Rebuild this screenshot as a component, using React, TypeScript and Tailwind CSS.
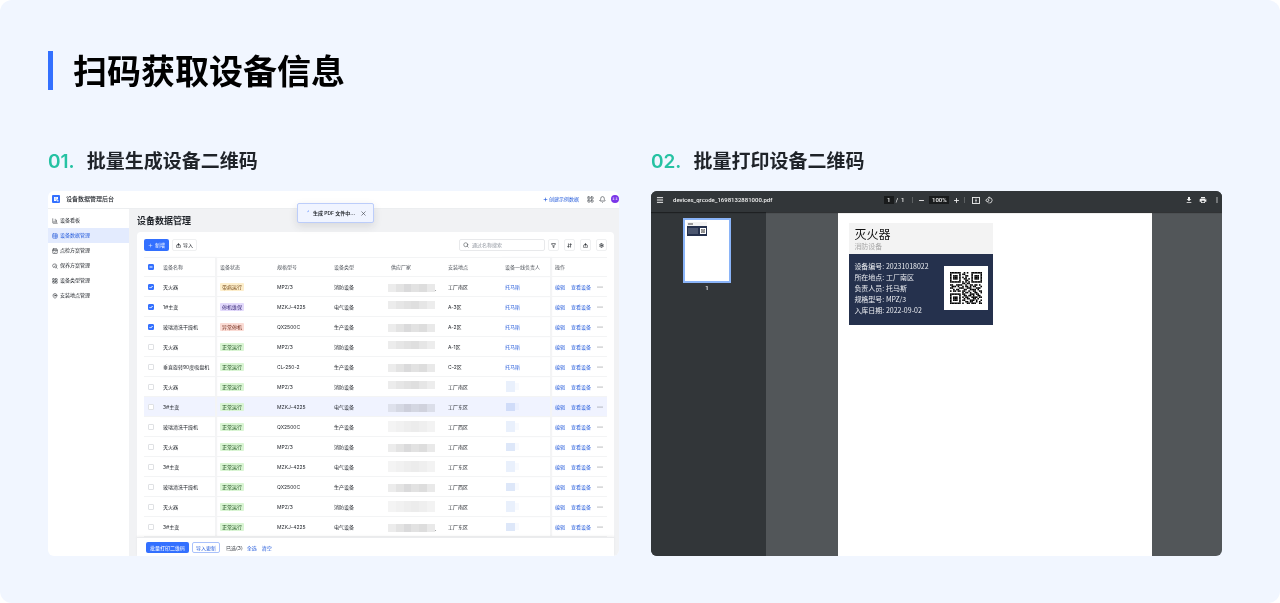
import React, { useState } from 'react';
import {
  ArrowDownUp,
  Bell,
  CalendarCheck,
  ChartColumn,
  Funnel,
  LayoutGrid,
  MapPin,
  Menu,
  Minus,
  Plus,
  Search,
  Settings,
  TableProperties,
  X,
} from 'lucide-react';
import { MdDownload, MdMoreVert, MdPrint, MdRotate90DegreesCcw } from 'react-icons/md';

interface Device {
  id: number;
  name: string;
  status: string;
  model: string;
  type: string;
  supplier: 'a' | 'b' | 'c';
  dot?: boolean;
  location: string;
  owner?: string;
  ownerShade?: 'light' | 'dark';
}

interface IconProps {
  className?: string;
  strokeWidth?: number;
}

const devices: Device[] = [
  { id: 1, name: '灭火器', status: '带病运行', model: 'MPZ/3', type: '消防设备', supplier: 'a', dot: true, location: '工厂南区', owner: '托马斯' },
  { id: 2, name: '1#主变', status: '停机维保', model: 'MZKJ-4225', type: '电气设备', supplier: 'b', location: 'A-3区', owner: '托马斯' },
  { id: 3, name: '玻璃清洗干燥机', status: '异常停机', model: 'QX2500C', type: '生产设备', supplier: 'a', location: 'A-2区', owner: '托马斯' },
  { id: 4, name: '灭火器', status: '正常运行', model: 'MPZ/3', type: '消防设备', supplier: 'b', location: 'A-1区', owner: '托马斯' },
  { id: 5, name: '垂直旋转90度吸盘机', status: '正常运行', model: 'CL-250-2', type: '生产设备', supplier: 'a', location: 'C-2区', owner: '托马斯' },
  { id: 6, name: '灭火器', status: '正常运行', model: 'MPZ/3', type: '消防设备', supplier: 'b', location: '工厂南区', ownerShade: 'light' },
  { id: 7, name: '3#主变', status: '正常运行', model: 'MZKJ-4225', type: '电气设备', supplier: 'a', location: '工厂东区', ownerShade: 'dark' },
  { id: 8, name: '玻璃清洗干燥机', status: '正常运行', model: 'QX2500C', type: '生产设备', supplier: 'c', location: '工厂西区', ownerShade: 'light' },
  { id: 9, name: '灭火器', status: '正常运行', model: 'MPZ/3', type: '消防设备', supplier: 'a', location: '工厂南区', ownerShade: 'dark' },
  { id: 10, name: '3#主变', status: '正常运行', model: 'MZKJ-4225', type: '电气设备', supplier: 'c', location: '工厂东区', ownerShade: 'light' },
  { id: 11, name: '玻璃清洗干燥机', status: '正常运行', model: 'QX2500C', type: '生产设备', supplier: 'a', location: '工厂西区', ownerShade: 'dark' },
  { id: 12, name: '灭火器', status: '正常运行', model: 'MPZ/3', type: '消防设备', supplier: 'c', location: '工厂南区', ownerShade: 'light' },
  { id: 13, name: '3#主变', status: '正常运行', model: 'MZKJ-4225', type: '电气设备', supplier: 'a', dot: true, location: '工厂东区', ownerShade: 'dark' },
];

const statusStyles: Record<string, string> = {
  带病运行: 'bg-[#fdeecb] text-[#6b3d0c]',
  停机维保: 'bg-[#e3dafc] text-[#2f1f6e]',
  异常停机: 'bg-[#fbdcd5] text-[#6e2616]',
  正常运行: 'bg-[#d9f5d3] text-[#1f4f1f]',
};

const mosaics = {
  a: {
    box: 'h-[8px] mt-[2px]',
    cells: ['bg-[#ececec]', 'bg-[#e3e3e3]', 'bg-[#dadadb]', 'bg-[#e2e2e2]', 'bg-[#dddddd]', 'bg-[#e9e9e9]'],
  },
  b: {
    box: 'h-[8px] mb-[4px]',
    cells: ['bg-[#ececec]', 'bg-[#e6e6e6]', 'bg-[#e2e2e2]', 'bg-[#dfdfdf]', 'bg-[#e6e6e6]', 'bg-[#ededed]'],
  },
  c: {
    box: 'h-[11px]',
    cells: ['bg-[#f4f4f4]', 'bg-[#f1f1f1]', 'bg-[#eeeeee]', 'bg-[#ececec]', 'bg-[#efefef]', 'bg-[#f3f3f3]'],
  },
};

function ImportIcon({ className }: IconProps) {
  return (
    <svg viewBox="0 0 24 24" className={className} fill="none" stroke="currentColor" strokeWidth="2.4">
      <path d="M7 11H2.5v10h19V11H17" />
      <path d="M12 17V7" />
      <path d="M12 2l5 6H7z" fill="currentColor" />
    </svg>
  );
}

function MaintainIcon({ className }: IconProps) {
  return (
    <svg viewBox="0 0 24 24" className={className} fill="none" stroke="currentColor" strokeWidth="2">
      <path d="M8 18H6l-4-7 4-7h9l4 7-1 2" />
      <circle cx="14" cy="15" r="4" />
      <path d="M17 18l5 4" />
    </svg>
  );
}

const navItems = [
  { label: '设备看板', icon: ChartColumn },
  { label: '设备数据管理', icon: TableProperties, active: true },
  { label: '点检方案管理', icon: CalendarCheck },
  { label: '保养方案管理', icon: MaintainIcon },
  { label: '设备类型管理', icon: LayoutGrid },
  { label: '安装地点管理', icon: MapPin },
];

const tools = [
  { label: '筛选', icon: Funnel },
  { label: '排序', icon: ArrowDownUp },
  { label: '导出', icon: ImportIcon },
  { label: '设置', icon: Settings },
];

const columns = [
  { title: '设备名称', width: 'w-[57px]' },
  { title: '设备状态', width: 'w-[57px]' },
  { title: '规格型号', width: 'w-[57px]' },
  { title: '设备类型', width: 'w-[57px]' },
  { title: '供应厂家', width: 'w-[57px]' },
  { title: '安装地点', width: 'w-[57px]' },
  { title: '设备一线负责人', width: 'w-[50px]' },
  { title: '操作', width: '' },
];

const labelLines = ['设备编号: 20231018022', '所在地点: 工厂南区', '负责人员: 托马斯', '规格型号: MPZ/3', '入库日期: 2022-09-02'];

const qrRows = [
  '111111100101001111111',
  '100000101100001000001',
  '101110100011001011101',
  '101110101010001011101',
  '101110100110101011101',
  '100000100011001000001',
  '111111101010101111111',
  '000000001101100000000',
  '110011110010011011010',
  '011101001011010110001',
  '110000111001110001110',
  '001011000110011110100',
  '101101101100100110011',
  '000000001011010011001',
  '111111101100011101100',
  '100000100110110100110',
  '101110101011001111011',
  '101110100101100110100',
  '101110101100011101001',
  '100000100011011001010',
  '111111101001101110011',
];

function QrCode({ className }: { className: string }) {
  return (
    <svg viewBox="0 0 21 21" className={className} role="img" aria-label="设备二维码">
      {qrRows.map((row, y) =>
        row.split('').map((cell, x) =>
          cell === '1' ? <rect key={`${x}-${y}`} x={x} y={y} width="1.04" height="1.04" fill="#000" /> : null
        )
      )}
    </svg>
  );
}

function Checkbox({ label, checked, partial, onChange }: {
  label: string;
  checked: boolean;
  partial?: boolean;
  onChange: () => void;
}) {
  return (
    <span className="relative block size-[6px]">
      <input
        type="checkbox"
        aria-label={label}
        checked={checked}
        onChange={onChange}
        className="block size-[6px] appearance-none rounded-[1px] border border-[#dfe1e4] bg-white checked:border-[#3370ff] checked:bg-[#3370ff]"
      />
      {checked && (
        <svg viewBox="0 0 12 12" className="pointer-events-none absolute inset-0 size-[6px]" fill="none" stroke="white" strokeWidth="2">
          <path d={partial ? 'M3 6h6' : 'M3 6l2.2 2.2L9.2 4'} />
        </svg>
      )}
    </span>
  );
}

function SupplierMosaic({ kind, dot }: { kind: 'a' | 'b' | 'c'; dot?: boolean }) {
  const { box, cells } = mosaics[kind];
  return (
    <div className="flex items-end">
      <div className={`flex w-[47px] shrink-0 mix-blend-multiply ${box}`}>
        {cells.map((cell, i) => (
          <span key={i} className={`flex-1 ${cell}`} />
        ))}
      </div>
      {dot && <span className="text-[5px] leading-[6px]">.</span>}
    </div>
  );
}

function OwnerMosaic({ shade }: { shade?: 'light' | 'dark' }) {
  return (
    <div className="flex items-center pl-px mix-blend-multiply">
      {shade === 'dark' ? <span className="h-[8px] w-[9px] bg-[#dde7f9]" /> : <span className="h-[11px] w-[9px] bg-[#e9f0fc]" />}
      <span className="h-[7px] w-[4px] bg-[#f8fafe]" />
    </div>
  );
}

function DeviceTable() {
  const [selected, setSelected] = useState<number[]>([1, 2, 3]);

  const toggle = (id: number) => {
    setSelected((prev) => (prev.includes(id) ? prev.filter((item) => item !== id) : [...prev, id]));
  };

  const toggleAll = () => {
    setSelected((prev) => (prev.length > 0 ? [] : devices.map((d) => d.id)));
  };

  return (
    <>
      <div className="px-[7px]">
        <table className="w-full table-fixed border-separate border-spacing-0 text-left text-[5px] leading-[8px] whitespace-nowrap text-[#1f2329] [&_td]:h-5 [&_td]:border-b [&_td]:border-[#f3f4f5] [&_td]:py-0 [&_td]:pr-0 [&_td]:pl-1 [&_th]:h-5 [&_th]:border-y [&_th]:border-[#f3f4f5] [&_th]:py-0 [&_th]:pr-0 [&_th]:pl-1 [&_th]:font-normal [&_th]:text-[#51565d]">
          <thead>
            <tr>
              <th className="w-[15px]">
                <Checkbox label="全选设备" checked={selected.length > 0} partial={selected.length < devices.length} onChange={toggleAll} />
              </th>
              {columns.map((column, i) => (
                <th
                  key={column.title}
                  className={`${column.width} ${i === 0 || i === 6 ? 'border-r shadow-[1px_0_1px_#f4f4f5]' : ''}`}
                >
                  {column.title}
                </th>
              ))}
            </tr>
          </thead>
          <tbody>
            {devices.map((device) => (
              <tr key={device.id} className={device.id === 7 ? 'bg-[#f0f3ff]' : ''}>
                <td>
                  <Checkbox label={`选择${device.name}`} checked={selected.includes(device.id)} onChange={() => toggle(device.id)} />
                </td>
                <td className="border-r shadow-[1px_0_1px_#f4f4f5]">{device.name}</td>
                <td>
                  <span className={`inline-block rounded-[1px] px-[2px] align-middle ${statusStyles[device.status]}`}>{device.status}</span>
                </td>
                <td>{device.model}</td>
                <td>{device.type}</td>
                <td className="!pl-px">
                  <SupplierMosaic kind={device.supplier} dot={device.dot} />
                </td>
                <td>{device.location}</td>
                <td className="border-r shadow-[1px_0_1px_#f4f4f5]">
                  {device.owner ? (
                    <a href="#owner" className="text-[#245bdb]">{device.owner}</a>
                  ) : (
                    <OwnerMosaic shade={device.ownerShade} />
                  )}
                </td>
                <td>
                  <div className="flex items-center gap-[6px] text-[#245bdb]">
                    <a href="#edit">编辑</a>
                    <a href="#view">查看设备</a>
                    <button type="button" aria-label="更多" className="text-[#51565d]">
                      <svg viewBox="0 0 12 4" className="h-[2px] w-[6px]" fill="currentColor">
                        <circle cx="2" cy="2" r="1" />
                        <circle cx="6" cy="2" r="1" />
                        <circle cx="10" cy="2" r="1" />
                      </svg>
                    </button>
                  </div>
                </td>
              </tr>
            ))}
          </tbody>
        </table>
      </div>
      <div className="relative flex h-[19px] items-center border-t border-[#ebecee] bg-white pt-px pl-[9px] text-[5px] leading-[8px] shadow-[0_-1px_2px_rgba(31,35,41,0.06)]">
        <button type="button" className="flex h-[11px] w-[43px] items-center justify-center rounded-[2px] bg-[#3370ff] text-white">
          批量打印二维码
        </button>
        <button type="button" className="ml-[3px] flex h-[11px] w-[28px] items-center justify-center rounded-[2px] border border-[#a9c1fb] text-[#245bdb]">
          导入更新
        </button>
        <span className="ml-[6px] text-[#373c43]">已选({selected.length})</span>
        <button type="button" className="ml-[4px] text-[#245bdb]" onClick={() => setSelected(devices.map((d) => d.id))}>
          全选
        </button>
        <button type="button" className="ml-[5px] text-[#245bdb]" onClick={() => setSelected([])}>
          清空
        </button>
      </div>
    </>
  );
}

function AdminPanel() {
  const [toast, setToast] = useState(true);

  return (
    <div className="relative flex flex-1 flex-col overflow-hidden rounded-[6px] bg-white font-[Inter,'Noto_Sans_CJK_SC',sans-serif] text-[#1f2329]">
      <header className="flex h-[18px] items-center border-b border-[#eceef0] pb-px pl-1 text-[5px] leading-[8px]">
        <span className="flex size-[8px] items-center justify-center rounded-[1px] bg-[#3370ff]">
          <svg viewBox="0 0 12 12" className="size-[6px]" fill="white">
            <path d="M2 2h8v5H7v3H2z" />
            <path d="M8 8h3v3H8z" opacity="0.8" />
            <path d="M3.5 4h4M3.5 6.5h2" stroke="#3370ff" strokeWidth="0.8" />
          </svg>
        </span>
        <h3 className="ml-[6px] text-[6px] font-medium">设备数据管理后台</h3>
        <button type="button" className="ml-auto flex items-center gap-px text-[#245bdb]">
          <Plus className="size-[5px]" strokeWidth={3} />
          创建示例数据
        </button>
        <button type="button" aria-label="应用" className="ml-[8px]">
          <LayoutGrid className="size-[7px] text-[#373c43]" />
        </button>
        <button type="button" aria-label="通知" className="ml-[5px]">
          <Bell className="size-[7px] text-[#373c43]" />
        </button>
        <span className="ml-[5px] flex size-[8px] items-center justify-center rounded-full bg-[#7a35e8] text-white">
          <svg viewBox="0 0 16 16" className="size-[8px]" fill="none" stroke="currentColor" strokeWidth="1">
            <path d="M3 6h4M5 5v5M3 9h4M9 6h4M11 5v5M9 9h4" opacity="0.75" />
          </svg>
        </span>
      </header>

      <div className="flex flex-1">
        <nav className="w-[81px] shrink-0 pt-1 text-[5px] leading-[15px]">
          {navItems.map(({ label, icon: Icon, active }) => (
            <a
              key={label}
              href="#nav"
              className={`flex h-[15px] items-center gap-[2px] pl-1 ${active ? 'bg-[#e3ebfe] text-[#245bdb]' : ''}`}
            >
              <Icon className="size-[6px] shrink-0" strokeWidth={2} />
              {label}
            </a>
          ))}
        </nav>

        <main className="flex min-w-0 flex-1 flex-col bg-[#f1f2f4] pr-[5px] pl-[8px]">
          <h3 className="h-[23px] text-[9px] leading-[23px] font-bold">设备数据管理</h3>
          <div className="flex-1 rounded-t-[4px] bg-white pt-[7px]">
            <div className="mb-[6px] flex items-center px-[7px] text-[5px] leading-[8px]">
              <button type="button" className="flex h-[12px] w-[25px] items-center justify-center gap-[2px] rounded-[2px] bg-[#3370ff] text-white">
                <Plus className="size-[5px]" strokeWidth={2} />
                新增
              </button>
              <button type="button" className="ml-[3px] flex h-[12px] w-[25px] items-center justify-center gap-[2px] rounded-[2px] border border-[#eff0f1]">
                <ImportIcon className="size-[5px]" />
                导入
              </button>
              <label className="mr-[3px] ml-auto flex h-[12px] w-[86px] items-center gap-[3px] rounded-[2px] border border-[#e8e9eb] pl-[3px]">
                <Search className="size-[6px] shrink-0 text-[#373c43]" />
                <input
                  type="text"
                  aria-label="搜索"
                  placeholder="通过名称搜索"
                  className="min-w-0 flex-1 outline-none placeholder:text-[#8f959e]"
                />
              </label>
              <div className="flex gap-[5px]">
                {tools.map(({ label, icon: Icon }) => (
                  <button
                    key={label}
                    type="button"
                    aria-label={label}
                    className="flex h-[12px] w-[11px] items-center justify-center rounded-[2px] border border-[#eff0f1]"
                  >
                    <Icon className="size-[5px] shrink-0" strokeWidth={3} />
                  </button>
                ))}
              </div>
            </div>
            <DeviceTable />
          </div>
        </main>
      </div>

      {toast && (
        <div
          role="status"
          className="absolute top-[12px] left-[249px] flex h-[20px] w-[77px] items-center rounded-[2px] border border-[#bccdfa] bg-[#f0f4ff] pl-[8px] text-[5px] leading-[8px] font-semibold shadow-[0_3px_8px_rgba(31,35,41,0.12)]"
        >
          <svg viewBox="0 0 12 12" className="size-[6px]" fill="none" stroke="#3370ff" strokeWidth="1.4">
            <path d="M3 3.4A4.5 4.5 0 0 1 6 2" />
          </svg>
          <span className="ml-px">生成 PDF 文件中...</span>
          <button type="button" aria-label="关闭" className="ml-[5px]" onClick={() => setToast(false)}>
            <X className="size-[7px] text-[#373c43]" strokeWidth={2} />
          </button>
        </div>
      )}
    </div>
  );
}

function PdfPanel() {
  return (
    <div className="flex flex-1 flex-col overflow-hidden rounded-[6px] bg-[#525659] font-[Roboto,'Noto_Sans_CJK_SC',sans-serif] text-[#f1f1f1]">
      <header className="relative grid h-[21px] grid-cols-[1fr_auto_1fr] items-center bg-[#323639] pr-px pb-[3px] pl-[5px] text-[6px] leading-[8px] font-medium shadow-[0_1px_1px_rgba(0,0,0,0.4)]">
        <div className="flex items-center gap-[9px]">
          <button type="button" aria-label="菜单">
            <Menu className="size-[8px]" strokeWidth={3} />
          </button>
          <span>devices_qrcode_1698132881000.pdf</span>
        </div>
        <div className="flex items-center">
          <input type="text" aria-label="页码" defaultValue="1" className="h-[8px] w-[10px] bg-[#191b1c] text-center outline-none" />
          <span className="ml-[2px]">/&nbsp; 1</span>
          <span className="ml-[8px] h-[6px] w-px bg-[#5d6163]" />
          <button type="button" aria-label="缩小" className="ml-[5px]">
            <Minus className="size-[7px]" strokeWidth={3} />
          </button>
          <input type="text" aria-label="缩放" defaultValue="100%" className="ml-[4px] h-[8px] w-[20px] bg-[#191b1c] text-center outline-none" />
          <button type="button" aria-label="放大" className="ml-[4px]">
            <Plus className="size-[7px]" strokeWidth={3} />
          </button>
          <span className="ml-[4px] h-[6px] w-px bg-[#5d6163]" />
          <button type="button" aria-label="适合页面" className="ml-[7px]">
            <svg viewBox="0 0 16 14" className="h-[7px] w-[8px]" fill="none" stroke="currentColor" strokeWidth="1.8">
              <rect x="1" y="1" width="14" height="12" />
              <path d="M8 3v2.5M8 8.5V11M6.5 7h3" />
            </svg>
          </button>
          <button type="button" aria-label="旋转" className="ml-[5px]">
            <MdRotate90DegreesCcw className="size-[8px]" />
          </button>
        </div>
        <div className="flex items-center justify-end gap-[6px]">
          <button type="button" aria-label="下载"><MdDownload className="size-[8px]" /></button>
          <button type="button" aria-label="打印"><MdPrint className="size-[8px]" /></button>
          <button type="button" aria-label="更多"><MdMoreVert className="size-[8px]" /></button>
        </div>
      </header>

      <div className="flex flex-1">
        <aside className="flex w-[115px] shrink-0 flex-col items-center bg-[#323639] pt-[6px] pr-[3px]">
          <div className="h-[65px] w-[48px] border-2 border-[#8ab4f8] bg-white pt-[2px] pl-[2px]">
            <div className="w-[20px]">
              <div className="h-[4px] bg-[#f3f3f3] pt-px pl-px">
                <div className="h-[2px] w-[5px] bg-[#9a9a9a]" />
              </div>
              <div className="flex h-[10px] items-center justify-between bg-[#25314d] pr-px pl-px">
                <div className="h-[6px] w-[10px] bg-[#4b566f]" />
                <div className="bg-white p-px"><QrCode className="size-[4px]" /></div>
              </div>
            </div>
          </div>
          <span className="mt-px text-[6px] leading-[8px] font-medium">1</span>
        </aside>

        <div className="flex flex-1 justify-center pl-[2px]">
          <div className="mt-px w-[69%] bg-white pt-[10px] pl-[11px] font-['Noto_Sans_CJK_SC',sans-serif]">
            <div className="w-[144px]">
              <div className="h-[31px] bg-[#f3f3f3] pt-[2px] pl-[5px]">
                <h3 className="text-[12px] leading-[17px] text-[#111]">灭火器</h3>
                <p className="text-[7px] leading-[8px] text-[#a8a8a8]">消防设备</p>
              </div>
              <div className="flex h-[71px] items-center justify-between bg-[#25314d] pr-[5px] pb-[3px] pl-[5px]">
                <div className="text-[7px] leading-[11px] whitespace-nowrap text-[#eceef2]">
                  {labelLines.map((line) => (
                    <p key={line}>{line}</p>
                  ))}
                </div>
                <div className="flex size-[44px] shrink-0 items-center justify-center bg-white">
                  <QrCode className="size-[32px]" />
                </div>
              </div>
            </div>
          </div>
        </div>
      </div>
    </div>
  );
}

function StepTitle({ no, children }: { no: string; children: React.ReactNode }) {
  return (
    <h2 className="mb-[17px] flex h-[28px] items-baseline gap-[12px] text-[19px] leading-[28px] font-bold text-[#1f2329]">
      <span className="font-[Inter,sans-serif] font-semibold text-[#26c2a3]">{no}</span>
      {children}
    </h2>
  );
}

const App: React.FC = () => {
  return (
    <div className="min-h-screen bg-white">
      <div className="min-h-screen rounded-[12px] bg-[#f1f6ff] pt-[51px] pr-[58px] pb-[47px] pl-[48px] font-['Noto_Sans_CJK_SC',sans-serif]">
        <h1 className="mb-[56px] flex h-[39px] items-center border-l-[5px] border-[#3370ff] pb-[2px] pl-[20px] text-[34px] leading-[39px] font-bold text-black">
          扫码获取设备信息
        </h1>
        <div className="grid grid-cols-2 gap-x-8">
          <section className="flex min-w-0 flex-col">
            <StepTitle no="01.">批量生成设备二维码</StepTitle>
            <AdminPanel />
          </section>
          <section className="flex min-w-0 flex-col">
            <StepTitle no="02.">批量打印设备二维码</StepTitle>
            <PdfPanel />
          </section>
        </div>
      </div>
    </div>
  );
};

export default App;
